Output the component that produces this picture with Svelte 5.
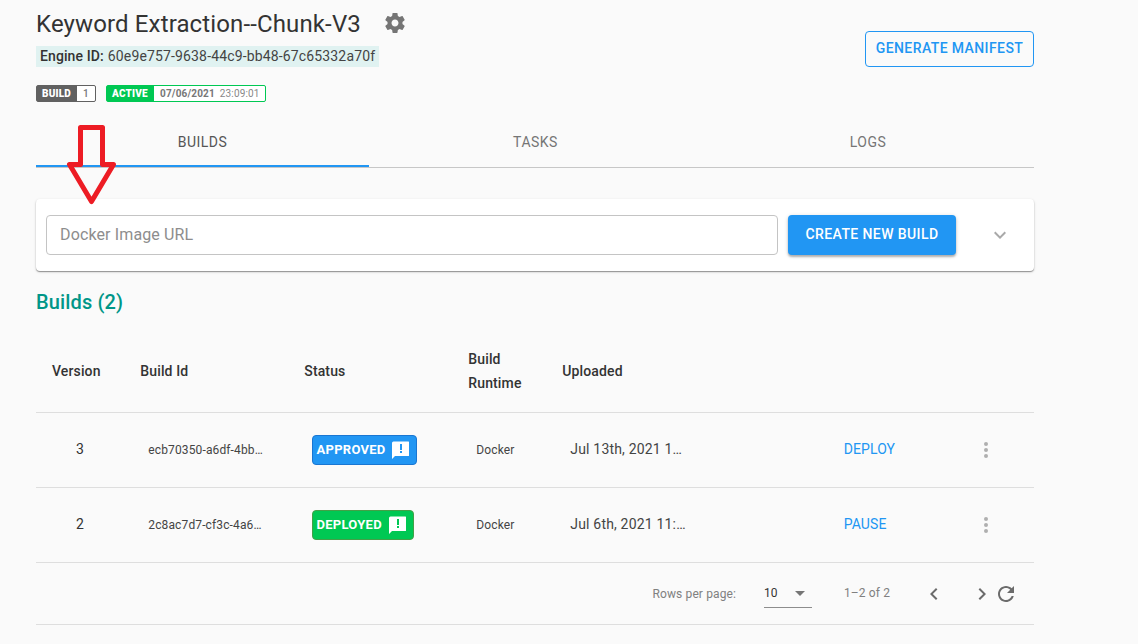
<script>
  const tabs = ['BUILDS', 'TASKS', 'LOGS'];
  const builds = [
    { version: 3, id: 'ecb70350-a6df-4bb…', status: 'APPROVED', tone: 'blue', runtime: 'Docker', uploaded: 'Jul 13th, 2021 1…', action: 'DEPLOY' },
    { version: 2, id: '2c8ac7d7-cf3c-4a6…', status: 'DEPLOYED', tone: 'green', runtime: 'Docker', uploaded: 'Jul 6th, 2021 11:…', action: 'PAUSE' }
  ];
</script>

<main>
  <header>
    <div class="info">
      <div class="title">
        <h1>Keyword Extraction--Chunk-V3</h1>
        <svg width="24" height="24" viewBox="0 0 24 24" fill="#757575"><path d="M19.43 12.98c.04-.32.07-.64.07-.98s-.03-.66-.07-.98l2.11-1.65c.19-.15.24-.42.12-.64l-2-3.46c-.12-.22-.39-.3-.61-.22l-2.49 1c-.52-.4-1.08-.73-1.69-.98l-.38-2.65C14.46 2.18 14.25 2 14 2h-4c-.25 0-.46.18-.49.42l-.38 2.65c-.61.25-1.17.59-1.69.98l-2.49-1c-.23-.09-.49 0-.61.22l-2 3.46c-.13.22-.07.49.12.64l2.11 1.65c-.04.32-.07.65-.07.98s.03.66.07.98l-2.11 1.65c-.19.15-.24.42-.12.64l2 3.46c.12.22.39.3.61.22l2.49-1c.52.4 1.08.73 1.69.98l.38 2.65c.03.24.24.42.49.42h4c.25 0 .46-.18.49-.42l.38-2.65c.61-.25 1.17-.59 1.69-.98l2.49 1c.23.09.49 0 .61-.22l2-3.46c.12-.22.07-.49-.12-.64l-2.11-1.65zM12 15.5c-1.93 0-3.5-1.57-3.5-3.5s1.570-3.5 3.5-3.5 3.5 1.570 3.5 3.5-1.570 3.5-3.5 3.5z" /></svg>
      </div>
      <div class="engine"><b>Engine ID:</b> <span>60e9e757-9638-44c9-bb48-67c65332a70f</span></div>
      <div class="badges">
        <div class="badge gray"><span class="label">BUILD</span><span class="value one">1</span></div>
        <div class="badge green"><span class="label">ACTIVE</span><span class="value"><b>07/06/2021</b><i>23:09:01</i></span></div>
      </div>
    </div>
    <button class="manifest">GENERATE MANIFEST</button>
  </header>

  <nav>
    {#each tabs as tab, i}
      <div class="tab" class:active={i === 0}><span>{tab}</span></div>
    {/each}
  </nav>

  <section class="panel">
    <input placeholder="Docker Image URL" />
    <button class="create">CREATE NEW BUILD</button>
    <svg class="chevron" width="24" height="24" viewBox="0 0 24 24" fill="#a9a9a9"><path d="M7.410 8.590 12 13.170l4.590-4.580L18 10l-6 6-6-6z" /></svg>
  </section>

  <h2>Builds (2)</h2>

  <section class="table">
    <div class="row head">
      <span>Version</span><span>Build Id</span><span>Status</span><span class="wrap">Build Runtime</span><span>Uploaded</span>
    </div>
    {#each builds as b}
      <div class="row">
        <span class="version">{b.version}</span>
        <span class="small">{b.id}</span>
        <span class="cell">
          <span class="status {b.tone}">
            <span>{b.status}</span>
            <svg width="18" height="18" viewBox="0 0 18 18" fill="#fff" fill-rule="evenodd"><path d="M1.500.5h15q.5 0 .5.5v13.500q0 .5-.5.5H3l-3 3V2Q0 .5 1.500.5ZM8 3h2v6H8ZM8 10h2v2H8Z" /></svg>
          </span>
        </span>
        <span class="small runtime">{b.runtime}</span>
        <span class="date">{b.uploaded}</span>
        <span class="action">{b.action}</span>
        <svg width="24" height="24" viewBox="0 0 24 24" fill="#afafaf"><circle cx="12" cy="6" r="2" /><circle cx="12" cy="12" r="2" /><circle cx="12" cy="18" r="2" /></svg>
      </div>
    {/each}
    <footer>
      <span class="rpp">Rows per page:</span>
      <div class="select"><span>10</span><svg width="24" height="24" viewBox="0 0 24 24" fill="#757575"><path d="m7 10 5 5 5-5z" /></svg></div>
      <span class="range">1–2 of 2</span>
      <svg class="prev" width="24" height="24" viewBox="0 0 24 24" fill="#6b6b6b"><path d="M15.410 7.410 14 6l-6 6 6 6 1.410-1.410L10.830 12z" /></svg>
      <svg class="next" width="24" height="24" viewBox="0 0 24 24" fill="#6b6b6b"><path d="M10 6 8.590 7.410 13.170 12l-4.580 4.590L10 18l6-6z" /></svg>
      <svg width="24" height="24" viewBox="0 0 24 24" fill="#6b6b6b"><path d="M17.650 6.350C16.200 4.900 14.210 4 12 4c-4.420 0-7.990 3.580-7.990 8s3.570 8 7.990 8c3.730 0 6.840-2.550 7.730-6h-2.080c-.82 2.330-3.040 4-5.650 4-3.310 0-6-2.690-6-6s2.690-6 6-6c1.660 0 3.140.69 4.220 1.780L13 11h7V4l-2.350 2.350z" /></svg>
    </footer>
  </section>

  <svg class="arrow" width="54" height="86" viewBox="0 0 54 86" fill="none" stroke="#ed1c24" stroke-width="5" stroke-linejoin="round"><path d="M15.500 7.500H37.500V44.500H48.500L26.500 81.500 4.500 44.500H15.500Z" /></svg>
</main>

<style>
  :global(body) { background: #fafafa; overflow: hidden; }
  * { box-sizing: border-box; }
  main { position: relative; width: 998px; height: 644px; margin-left: 36px; font-family: Roboto, sans-serif; color: #333; font-size: 14px; }
  svg { display: block; flex: none; }
  span, h1, h2, b { white-space: nowrap; }
  header { display: flex; justify-content: space-between; height: 117px; }
  .title { display: flex; align-items: center; height: 46px; gap: 23px; }
  h1 { margin: 0; padding-top: 2px; width: 324px; font-size: 24px; font-weight: 400; line-height: 32px; letter-spacing: 0.130px; }
  .engine { display: flex; align-items: center; gap: 4px; width: 343px; height: 21px; padding: 0 0 2px 4px; background: #e0f2f1; letter-spacing: .15px; }
  .engine b { font-weight: 500; letter-spacing: .1px; }
  .engine span { color: #444; }
  .badges { display: flex; gap: 10px; margin-top: 18px; }
  .badge { display: flex; height: 17px; border: 1px solid #616161; border-radius: 2px; background: #fff; font-size: 10px; line-height: 15px; }
  .label { padding: 0 5px; color: #fff; font-weight: 900; background: #616161; letter-spacing: .17px; }
  .gray { width: 60px; }
  .gray .label { width: 40px; }
  .badge.green { width: 160px; border-color: #00c853; }
  .green .label { width: 47px; background: #00c853; }
  .value { display: flex; gap: 5px; padding-left: 6px; color: #777; letter-spacing: .15px; }
  .value b { font-weight: 700; }
  .value i { font-style: normal; color: #888; }
  .one { font-weight: 500; }
  button { border: 0; border-radius: 4px; padding: 0 0 2px; font: 500 14px Roboto, sans-serif; letter-spacing: .4px; }
  .manifest { width: 169px; height: 36px; margin-top: 31px; border: 1px solid #2196f3; background: transparent; color: #2196f3; }
  nav { display: grid; grid-template-columns: 333px 333px 332px; height: 51px; border-bottom: 1px solid #c7c7c7; }
  .tab { display: flex; align-items: center; justify-content: center; padding-top: 2px; color: #757575; letter-spacing: .5px; border-bottom: 2px solid transparent; }
  .active { color: #555; border-color: #2196f3; }
  .panel { display: flex; align-items: center; height: 72px; margin-top: 31px; padding-left: 10px; border-radius: 4px; background: #fff; box-shadow: 0 1px 1px rgba(0,0,0,.35), 0 1px 3px rgba(0,0,0,.15); }
  input { width: 732px; height: 40px; padding: 0 13px 2px; border: 1px solid #c4c4c4; border-radius: 4px; outline: 0; background: #fff; font: 16px Roboto, sans-serif; letter-spacing: .13px; }
  input::placeholder { color: #8d8d8d; opacity: 1; }
  .create { width: 168px; height: 40px; margin-left: 10px; background: #2196f3; color: #fff; box-shadow: 0 2px 2px rgba(0,0,0,.24), 0 1px 4px rgba(0,0,0,.16); }
  .chevron { margin-left: 32px; }
  h2 { margin: 15px 0 0; height: 32px; line-height: 32px; color: #009688; font-size: 20px; font-weight: 500; letter-spacing: .15px; }
  .table { margin-top: 12px; }
  .row { display: grid; grid-template-columns: 88.300px 164px 164px 94px 273.400px 138.300px 24px; padding-left: 16px; align-items: center; height: 75px; border-bottom: 1px solid #dedede; }
  .head { height: 83px; font-weight: 500; line-height: 24px; letter-spacing: .13px; }
  .wrap { width: 60px; white-space: normal; }
  .version { padding: 0 0 2px 24px; }
  .row .small { padding-left: 8px; font-size: 12px; color: #444; letter-spacing: .13px; }
  .cell { padding-left: 7.700px; }
  .status { display: inline-flex; align-items: center; justify-content: space-between; width: 105px; height: 30px; padding: 0 6px 0 3.500px; border: 1px solid #1976d2; border-radius: 4px; background: #2196f3; color: #fff; font-size: 13px; font-weight: 700; letter-spacing: .27px; vertical-align: middle; }
  .status span { padding-bottom: 1px; }
  .status.green { width: 102px; border-color: #43a047; background: #00c853; }
  .date { padding: 0 0 2px 8px; color: #444; letter-spacing: .18px; }
  .action { padding: 0 0 2px 8px; color: #2196f3; letter-spacing: .1px; }
  footer { display: flex; align-items: center; height: 62px; padding-left: 616.500px; border-bottom: 1px solid #dedede; font-size: 12px; color: #808080; letter-spacing: .12px; }
  .rpp { width: 111.500px; }
  .select { display: flex; align-items: center; justify-content: space-between; width: 48px; height: 29px; border-bottom: 1px solid #8d8d8d; color: #333; }
  .range { width: 78px; padding: 0 0 2px 32px; }
  .prev { margin-left: 32px; }
  .next { margin-left: 24px; }
  .arrow { position: absolute; left: 29px; top: 120px; }
</style>
